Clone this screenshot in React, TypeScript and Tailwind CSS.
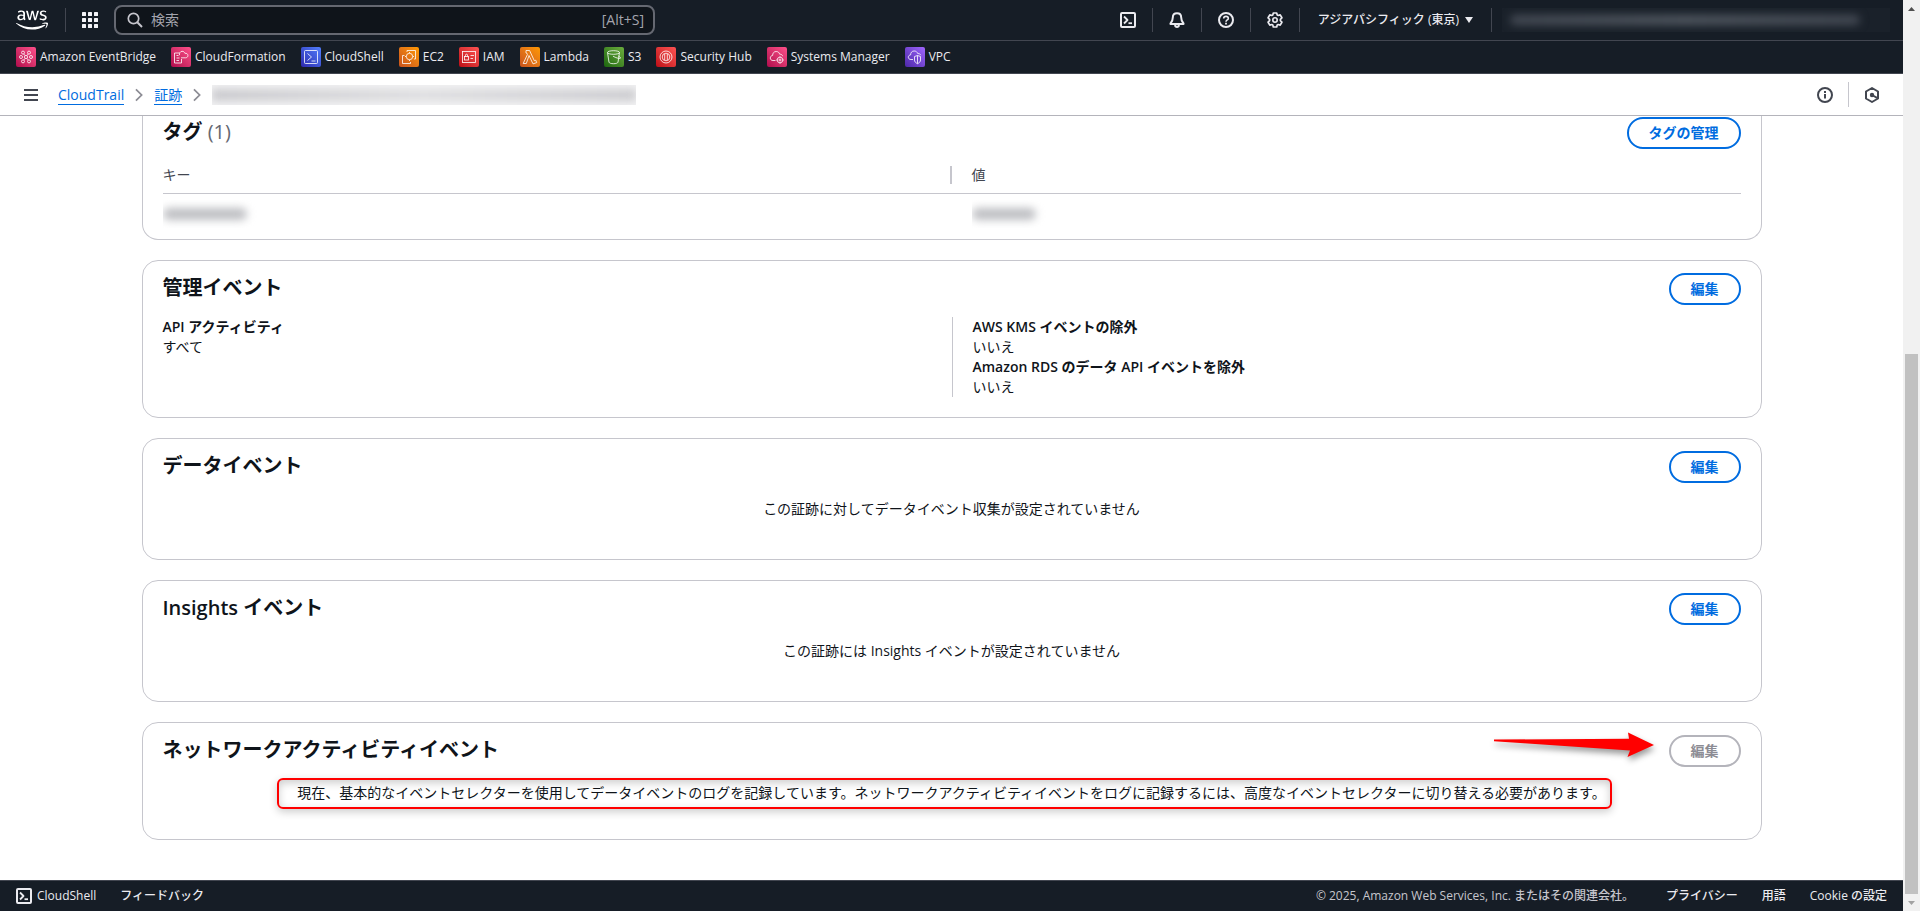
import React from "react";
import { FaAws } from "react-icons/fa";

type Service = {
  name: string;
  color: string;
  glyph: React.ReactNode;
};

// glyphs are drawn on a 20x20 tile
const services: Service[] = [
  {
    name: "Amazon EventBridge",
    color: "from-[#b0084d] to-[#ff4f8b]",
    glyph: (
      <>
        <circle cx="10" cy="10" r="1.6" />
        <circle cx="7" cy="5.6" r="1.5" />
        <circle cx="13" cy="5.6" r="1.5" />
        <circle cx="5" cy="10" r="1.5" />
        <circle cx="15" cy="10" r="1.5" />
        <circle cx="7" cy="14.4" r="1.5" />
        <circle cx="13" cy="14.4" r="1.5" />
        <path d="M7.8 7 9 8.6M12.2 7 11 8.6M7.8 13 9 11.4M12.2 13 11 11.4" />
      </>
    ),
  },
  {
    name: "CloudFormation",
    color: "from-[#b0084d] to-[#ff4f8b]",
    glyph: (
      <>
        <path d="M8.5 6H3.5v10h7v-4" />
        <path d="M5.5 8.5h2M5.5 11h3M5.5 13.5h2.5" />
        <path d="M8.5 8.2c-.3-2 .6-3.7 2.5-3.9 1.5-.1 2.5.8 2.9 2 1.9-.3 3 .8 3 2.2s-1 2.3-2.4 2.3H10" />
      </>
    ),
  },
  {
    name: "CloudShell",
    color: "from-[#2e27ad] to-[#527fff]",
    glyph: (
      <>
        <rect x="3.5" y="3.5" width="13" height="13" rx="1" />
        <path d="m6.5 6.5 4 3.5-4 3.5M10.5 14h4" />
      </>
    ),
  },
  {
    name: "EC2",
    color: "from-[#c8511b] to-[#ff9900]",
    glyph: (
      <>
        <circle cx="10.5" cy="9.5" r="3.2" />
        <path d="M8 3.5h8.5V12H15M8 3.5V5M5.5 8.5h-2v8h8V15" />
        <path d="M10.5 5v1.3M10.5 12.7V14M6 9.5h1.3M13.7 9.5H15" />
      </>
    ),
  },
  {
    name: "IAM",
    color: "from-[#bd0816] to-[#ff5252]",
    glyph: (
      <>
        <rect x="3.5" y="4.5" width="13" height="11" />
        <rect x="5.5" y="9.5" width="4" height="3.5" />
        <path d="M6.5 9.5V8.2a1 1 0 0 1 2 0v1.3M11.5 8.5H15M11.5 11.5H14" />
      </>
    ),
  },
  {
    name: "Lambda",
    color: "from-[#c8511b] to-[#ff9900]",
    glyph: (
      <path d="M6 3.5h3.6l4.7 10.2 1.5-.5.9 2.4-3.7 1.3L9 8.5 6.3 16.5H3.2L7.4 7.6 6.7 6H6z" />
    ),
  },
  {
    name: "S3",
    color: "from-[#1b660f] to-[#6cae3e]",
    glyph: (
      <>
        <ellipse cx="9.5" cy="5.5" rx="6" ry="1.8" />
        <path d="m3.5 5.5 1.5 9.7c.4 1 2.1 1.5 4.5 1.5s4.1-.5 4.5-1.5l1.5-9.7M9 9.2c3 1.6 5.5 2.5 7.3 2.1.6-.8-.6-1.6-2-2.3" />
      </>
    ),
  },
  {
    name: "Security Hub",
    color: "from-[#bd0816] to-[#ff5252]",
    glyph: (
      <>
        <circle cx="10" cy="10" r="6" />
        <circle cx="10" cy="10" r="3.8" />
        <path d="M8.7 7v6M11.3 7v6" />
      </>
    ),
  },
  {
    name: "Systems Manager",
    color: "from-[#b0084d] to-[#ff4f8b]",
    glyph: (
      <>
        <path d="M8.5 13.5H6c-1.7 0-2.7-1-2.7-2.5s1-2.4 2.3-2.5c0-2.4 1.4-4 3.6-4 1.8 0 3 1 3.5 2.7 1.7-.1 2.7.7 2.9 2" />
        <circle cx="13" cy="13" r="2.8" />
        <circle cx="13" cy="13" r="1" />
        <path d="M13 9.2v1M13 15.8v1M9.2 13h1M15.8 13h1" />
      </>
    ),
  },
  {
    name: "VPC",
    color: "from-[#4d27a8] to-[#a166ff]",
    glyph: (
      <>
        <path d="M8 12.5H6c-1.7 0-2.7-1-2.7-2.3s1-2.2 2.3-2.3c0-2.4 1.4-3.9 3.6-3.9 1.8 0 3 1 3.5 2.5 1.7 0 2.7.6 3 1.7" />
        <path d="m12.5 8.5 3 1V13c0 1.7-1 2.7-3 3.7-2-1-3-2-3-3.7V9.5zM12.5 8.5v8" />
      </>
    ),
  },
];

function Icon({
  children,
  className = "size-4",
}: {
  children: React.ReactNode;
  className?: string;
}) {
  return (
    <svg
      viewBox="0 0 16 16"
      className={className}
      fill="none"
      stroke="currentColor"
      strokeWidth="2"
      strokeLinejoin="round"
      aria-hidden="true"
    >
      {children}
    </svg>
  );
}

function ShellIcon() {
  return (
    <Icon>
      <rect x="1" y="1" width="14" height="14" rx="1" />
      <path d="m4 4.5 3.5 3.5L4 11.5" strokeWidth="1.8" />
      <path d="M8.5 11.2H12" strokeWidth="1.8" />
    </Icon>
  );
}

function Divider() {
  return <span className="h-6 w-px bg-[#424650]"></span>;
}

function Redacted({ className, bar }: { className: string; bar: string }) {
  return (
    <div className={`flex items-center overflow-hidden ${className}`}>
      <span className={bar}></span>
    </div>
  );
}

function TopNav() {
  return (
    <div className="flex h-[41px] items-center border-b border-[#424650] pl-4">
      <a href="#home" aria-label="AWS">
        <FaAws className="h-[26px] w-8" />
      </a>
      <div className="flex flex-1 items-center gap-4 pl-[17px]">
        <Divider />
        <button aria-label="サービス" className="text-[#f3f3f7]">
          <svg viewBox="0 0 16 16" className="size-4" fill="currentColor">
            {[0, 6, 12].map((y) =>
              [0, 6, 12].map((x) => (
                <rect key={`${x}-${y}`} x={x} y={y} width="4" height="4" rx="0.5" />
              ))
            )}
          </svg>
        </button>
        <label className="flex h-[30px] w-[541px] items-center rounded-lg border-2 border-[#656871] bg-[#0f141a] px-[9px] text-sm text-[#a4a4ad]">
          <Icon className="ml-0.5 size-4 text-[#c6c6cd]">
            <circle cx="6.5" cy="6.5" r="5.2" strokeWidth="1.7" />
            <path d="m10.3 10.3 4.7 4.7" />
          </Icon>
          <input
            aria-label="検索"
            placeholder="検索"
            className="ml-2 min-w-0 flex-1 bg-transparent outline-none placeholder:text-[#a4a4ad]"
          />
          <span>[Alt+S]</span>
        </label>
      </div>
      <div className="flex items-center gap-4 pr-[13px] text-[#ebebf0]">
        <button aria-label="CloudShell">
          <ShellIcon />
        </button>
        <Divider />
        <button aria-label="通知">
          <Icon>
            <path d="M8 1.2c-2.7 0-4.2 1.8-4.2 4.3 0 2.9-.6 4.2-2.3 6V12h13v-.5c-1.7-1.8-2.3-3.1-2.3-6 0-2.5-1.5-4.3-4.2-4.3z" />
            <path d="M6 13c.2 1.2 1 1.9 2 1.9s1.8-.7 2-1.9" />
          </Icon>
        </button>
        <Divider />
        <button aria-label="ヘルプ">
          <Icon>
            <circle cx="8" cy="8" r="7" />
            <path
              d="M5.7 6.6C5.7 5.2 6.7 4.4 8 4.4s2.3.8 2.3 2c0 1.6-2.3 1.5-2.3 3.4"
              strokeWidth="1.6"
            />
            <path d="M8 10.8v1.6" strokeWidth="1.8" />
          </Icon>
        </button>
        <Divider />
        <button aria-label="設定">
          <Icon>
            <path
              d="M6.3 1h3.4l.5 2 1 .5 2-.6 1.7 2.9-1.5 1.5v1.4l1.5 1.5-1.7 2.9-2-.6-1 .5-.5 2H6.3l-.5-2-1-.5-2 .6-1.7-2.9 1.5-1.5V7.300L1.100 5.800l1.700-2.900 2 .6 1-.5z"
              strokeWidth="1.7"
            />
            <circle cx="8" cy="8" r="2.2" strokeWidth="1.6" />
          </Icon>
        </button>
        <Divider />
        <button className="flex items-center gap-1.5 px-0.5 text-xs font-medium">
          アジアパシフィック (東京)
          <svg viewBox="0 0 8 6" className="h-1.5 w-2" fill="currentColor">
            <path d="M0 0h8L4 6z" />
          </svg>
        </button>
        <Divider />
        <Redacted
          className="-ml-1.5 h-6 w-[388px] bg-[#1a212a] px-2"
          bar="h-2.5 w-[350px] rounded-full bg-linear-to-r from-[#434953] via-[#4f565f] to-[#434953] blur-xs"
        />
      </div>
    </div>
  );
}

function Favorites() {
  return (
    <nav className="flex h-[33px] items-center gap-[15px] border-b border-[#424650] px-4 text-[#ebebf0]">
      {services.map((service) => (
        <a
          key={service.name}
          href="#service"
          className="flex items-center gap-1 text-xs font-medium"
        >
          <span className={`size-5 rounded-xs bg-linear-to-tr ${service.color}`}>
            <svg
              viewBox="0 0 20 20"
              className="size-5"
              fill="none"
              stroke="#fff"
              strokeWidth="0.8"
              aria-hidden="true"
            >
              {service.glyph}
            </svg>
          </span>
          {service.name}
        </a>
      ))}
    </nav>
  );
}

function Chevron() {
  return (
    <Icon className="h-3.5 w-4 text-[#8c8c94]">
      <path d="m4.5 1.5 6.5 6.5-6.5 6.5" strokeLinejoin="miter" />
    </Icon>
  );
}

function Breadcrumbs() {
  return (
    <div className="flex h-[42px] items-center border-b border-[#b4b4bb] pr-[23px] pl-6 text-[#424650]">
      <button aria-label="メニュー">
        <svg viewBox="0 0 14 12" className="h-3 w-3.5" stroke="currentColor" strokeWidth="2">
          <path d="M0 1h14M0 6h14M0 11h14" />
        </svg>
      </button>
      <nav className="ml-5 flex flex-1 items-center gap-[7px] text-sm text-[#006ce0]">
        <a href="#cloudtrail" className="border-b border-[#006ce0] leading-[19px]">
          CloudTrail
        </a>
        <Chevron />
        <a href="#trails" className="border-b border-[#006ce0] leading-[19px]">
          証跡
        </a>
        <Chevron />
        <Redacted
          className="h-5 w-[424px] bg-[#f3f3f4]"
          bar="h-3 w-full bg-linear-to-r from-[#c9c9cd] via-[#dedee0] to-[#cbcbcf] blur-xs"
        />
      </nav>
      <div className="flex items-center gap-[15px]">
        <button aria-label="情報">
          <Icon>
            <circle cx="8" cy="8" r="7" />
            <path d="M8 7v4.5M8 4v2" />
          </Icon>
        </button>
        <span className="h-[25px] w-px bg-[#c6c6cd]"></span>
        <button aria-label="ツール">
          <Icon>
            <path d="M8 1 14 4.5v7L8 15l-6-3.5v-7z" />
            <circle cx="8" cy="8" r="2.2" fill="currentColor" stroke="none" />
            <path d="m8 8 5.5 3.2" />
          </Icon>
        </button>
      </div>
    </div>
  );
}

function ActionButton({ children, disabled }: { children: React.ReactNode; disabled?: boolean }) {
  return (
    <button
      disabled={disabled}
      className="h-8 rounded-full border-2 border-[#006ce0] px-5 text-sm font-bold text-[#006ce0] disabled:border-[#b4b4bb] disabled:text-[#8c8c94]"
    >
      {children}
    </button>
  );
}

function Arrow() {
  return (
    <svg
      viewBox="0 0 162 26"
      className="absolute -top-[3px] right-[86px] h-[26px] w-[162px] overflow-visible drop-shadow-[1px_4px_3px_rgba(0,0,0,0.4)]"
      fill="#ff0000"
      aria-hidden="true"
    >
      <path d="M1 7.5 136 6.8 135 0.5 161 13 134.5 25 137 18.5 1 9.3z" />
    </svg>
  );
}

function Card({
  title,
  disabled,
  pointer,
  children,
}: {
  title: string;
  disabled?: boolean;
  pointer?: boolean;
  children: React.ReactNode;
}) {
  return (
    <section className="rounded-2xl border border-[#c6c6cd] px-5 pt-3 pb-5">
      <div className="flex items-start justify-between">
        <h2 className="text-xl leading-[30px] font-semibold">{title}</h2>
        <div className="relative">
          {pointer && <Arrow />}
          <ActionButton disabled={disabled}>編集</ActionButton>
        </div>
      </div>
      {children}
    </section>
  );
}

function Field({ label, value }: { label: string; value: string }) {
  return (
    <>
      <dt className="font-semibold">{label}</dt>
      <dd>{value}</dd>
    </>
  );
}

function TagsCard() {
  return (
    <section className="rounded-b-2xl border border-t-0 border-[#c6c6cd] px-5 pt-px pb-1">
      <div className="flex items-start justify-between">
        <h2 className="text-xl leading-[30px] font-semibold">
          タグ <span className="font-normal text-[#656871]">(1)</span>
        </h2>
        <ActionButton>タグの管理</ActionButton>
      </div>
      <table className="mt-2 w-full table-fixed text-left text-sm">
        <thead className="border-b border-[#c6c6cd] text-[#424650]">
          <tr className="h-9">
            <th className="font-normal">
              <div className="border-r-2 border-[#c6c6cd] leading-[18px]">キー</div>
            </th>
            <th className="pl-5 font-normal">値</th>
          </tr>
        </thead>
        <tbody>
          <tr className="h-[42px]">
            <td>
              <Redacted className="h-7" bar="h-3 w-[84px] rounded-full bg-[#bdbec2] blur-xs" />
            </td>
            <td className="pl-5">
              <Redacted className="h-7" bar="h-3 w-16 rounded-full bg-[#bdbec2] blur-xs" />
            </td>
          </tr>
        </tbody>
      </table>
    </section>
  );
}

function Footer() {
  return (
    <footer className="flex h-[31px] items-center justify-between border-t border-[#424650] bg-[#161d26] px-4 text-xs font-medium text-[#ebebf0]">
      <div className="flex items-center gap-6">
        <button className="flex items-center gap-[5px]">
          <ShellIcon />
          CloudShell
        </button>
        <a href="#feedback">フィードバック</a>
      </div>
      <div className="flex items-center gap-6">
        <span className="mr-2 text-[#c6c6cd]">
          © 2025, Amazon Web Services, Inc. またはその関連会社。
        </span>
        <a href="#privacy">プライバシー</a>
        <a href="#terms">用語</a>
        <a href="#cookie">Cookie の設定</a>
      </div>
    </footer>
  );
}

function Scrollbar() {
  return (
    <div className="flex w-[17px] flex-col items-center bg-[#f1f1f1]" aria-hidden="true">
      <svg viewBox="0 0 17 17" className="size-[17px]" fill="#505050">
        <path d="M5 11h7L8.5 7z" />
      </svg>
      <div className="flex-[337]"></div>
      <div className="w-[13px] flex-[540] bg-[#c1c1c1]"></div>
      <svg viewBox="0 0 17 17" className="size-[17px]" fill="#a3a3a3">
        <path d="M5 7h7l-3.5 4z" />
      </svg>
    </div>
  );
}

export default function App() {
  return (
    <div className="flex h-screen bg-white font-['Open_Sans','Noto_Sans_CJK_JP',sans-serif] text-[#0f141a]">
      <div className="flex min-w-0 flex-1 flex-col">
        <header className="bg-[#161d26] text-white">
          <TopNav />
          <Favorites />
        </header>
        <Breadcrumbs />
        <main className="mx-auto flex min-h-0 w-full max-w-[1620px] flex-1 flex-col gap-5 overflow-hidden text-sm">
          <TagsCard />
          <Card title="管理イベント">
            <div className="mt-3 grid grid-cols-2">
              <dl>
                <Field label="API アクティビティ" value="すべて" />
              </dl>
              <dl className="border-l border-[#c6c6cd] pl-5">
                <Field label="AWS KMS イベントの除外" value="いいえ" />
                <Field label="Amazon RDS のデータ API イベントを除外" value="いいえ" />
              </dl>
            </div>
          </Card>
          <Card title="データイベント">
            <p className="mt-4 mb-5 text-center">
              この証跡に対してデータイベント収集が設定されていません
            </p>
          </Card>
          <Card title="Insights イベント">
            <p className="mt-4 mb-5 text-center">
              この証跡には Insights イベントが設定されていません
            </p>
          </Card>
          <Card title="ネットワークアクティビティイベント" disabled pointer>
            <div className="mt-4 mb-4 text-center">
              <p className="relative inline-block align-top">
                現在、基本的なイベントセレクターを使用してデータイベントのログを記録しています。ネットワークアクティビティイベントをログに記録するには、高度なイベントセレクターに切り替える必要があります。
                <span className="absolute -top-[5px] -right-1.5 -bottom-1.5 -left-5 rounded-md border-2 border-[#ff0000] shadow-[0_3px_8px_rgba(0,0,0,0.2),inset_0_3px_8px_rgba(0,0,0,0.2)]"></span>
              </p>
            </div>
          </Card>
        </main>
        <Footer />
      </div>
      <Scrollbar />
    </div>
  );
}
